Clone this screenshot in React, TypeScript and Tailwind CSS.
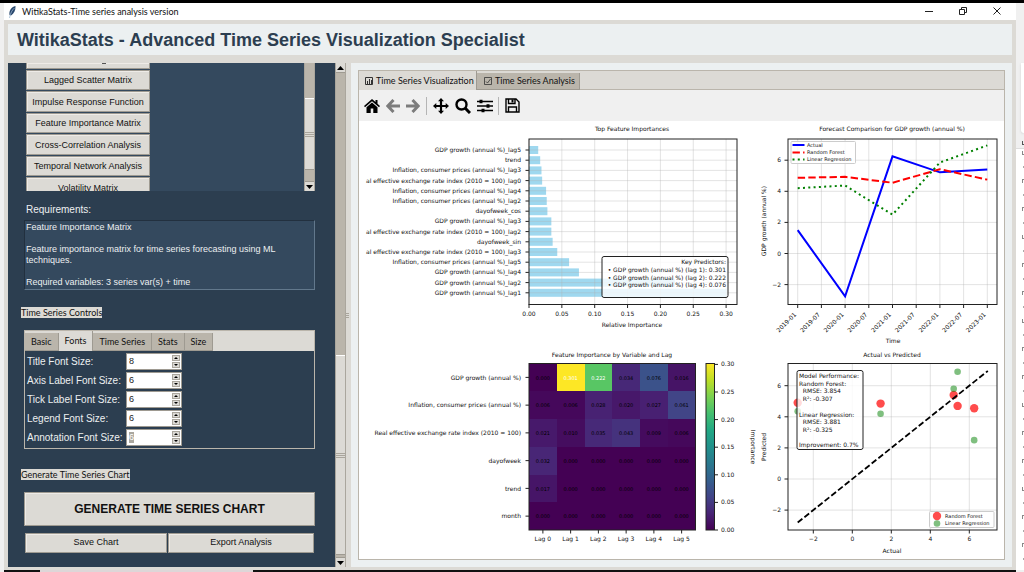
import type { ReactNode } from "react";

const ui = "font-['Liberation_Sans',Arial,sans-serif]";
const segoe = "font-['Lato','Open_Sans',sans-serif]";

const methods = [
  "Lagged Scatter Matrix",
  "Impulse Response Function",
  "Feature Importance Matrix",
  "Cross-Correlation Analysis",
  "Temporal Network Analysis",
  "Volatility Matrix",
];

const fontFields = [
  { id: "title", label: "Title Font Size:", value: "8" },
  { id: "axis", label: "Axis Label Font Size:", value: "6" },
  { id: "tick", label: "Tick Label Font Size:", value: "6" },
  { id: "legend", label: "Legend Font Size:", value: "6" },
  { id: "annotation", label: "Annotation Font Size:", value: "6" },
];

const importances = [
  { name: "GDP growth (annual %)_lag5", value: 0.014 },
  { name: "trend", value: 0.017 },
  { name: "Inflation, consumer prices (annual %)_lag3", value: 0.019 },
  { name: "al effective exchange rate index (2010 = 100)_lag0", value: 0.02 },
  { name: "Inflation, consumer prices (annual %)_lag4", value: 0.026 },
  { name: "Inflation, consumer prices (annual %)_lag2", value: 0.027 },
  { name: "dayofweek_cos", value: 0.028 },
  { name: "GDP growth (annual %)_lag3", value: 0.034 },
  { name: "al effective exchange rate index (2010 = 100)_lag2", value: 0.034 },
  { name: "dayofweek_sin", value: 0.036 },
  { name: "al effective exchange rate index (2010 = 100)_lag3", value: 0.043 },
  { name: "Inflation, consumer prices (annual %)_lag5", value: 0.061 },
  { name: "GDP growth (annual %)_lag4", value: 0.076 },
  { name: "GDP growth (annual %)_lag2", value: 0.222 },
  { name: "GDP growth (annual %)_lag1", value: 0.301 },
];

const heatRows = [
  { name: "GDP growth (annual %)", values: [0, 0.301, 0.222, 0.034, 0.076, 0.016] },
  { name: "Inflation, consumer prices (annual %)", values: [0.006, 0.006, 0.028, 0.02, 0.027, 0.061] },
  { name: "Real effective exchange rate index (2010 = 100)", values: [0.021, 0.01, 0.035, 0.043, 0.009, 0.006] },
  { name: "dayofweek", values: [0.032, 0, 0, 0, 0, 0] },
  { name: "trend", values: [0.017, 0, 0, 0, 0, 0] },
  { name: "month", values: [0, 0, 0, 0, 0, 0] },
];

const viridis = [
  [68, 1, 84], [72, 36, 117], [65, 68, 135], [53, 95, 141], [42, 120, 142], [33, 145, 140],
  [34, 168, 132], [68, 191, 112], [122, 209, 81], [189, 223, 38], [253, 231, 37],
];

function heatColor(v: number) {
  const t = Math.min(v / 0.301, 1) * 10;
  const i = Math.min(Math.floor(t), 9);
  const c = viridis[i].map((a, k) => Math.round(a + (viridis[i + 1][k] - a) * (t - i)));
  return `rgb(${c.join(",")})`;
}

function Arrow({ up = false }: { up?: boolean }) {
  return (
    <svg viewBox="0 0 7 4" className="h-1 w-[7px]" aria-hidden="true">
      <path d={up ? "M0 4 3.5 0 7 4Z" : "M0 0 3.5 4 7 0Z"} />
    </svg>
  );
}

function Grip({ className }: { className: string }) {
  return (
    <span className={`flex flex-col gap-px ${className}`}>
      <i className="h-px bg-[#a9a59c]" />
      <i className="h-px bg-[#a9a59c]" />
      <i className="h-px bg-[#a9a59c]" />
    </span>
  );
}

function Scrollbar({ before, thumb, up = true }: { before: string; thumb: string; up?: boolean }) {
  return (
    <div className="flex w-[11px] shrink-0 flex-col border-x border-[#aaa69d] bg-[#bab5ab]">
      {up && (
        <button aria-label="Scroll up" className="flex h-[10px] items-center justify-center border-b border-[#9e9a91] bg-[#dcdad5]">
          <Arrow up />
        </button>
      )}
      <div className={before} />
      <div className={`flex flex-col justify-center border-y border-t-white border-b-[#9e9a91] bg-[#dcdad5] ${thumb}`}>
        <Grip className="w-full" />
      </div>
      <div className="flex-1" />
      <button aria-label="Scroll down" className="flex h-[10px] items-center justify-center border-t border-[#9e9a91] bg-[#dcdad5]">
        <Arrow />
      </button>
    </div>
  );
}

const raised = "border border-[#9e9a91] bg-[#dcdad5] text-[#111] shadow-[inset_1px_1px_0_#eeebe7]";

function MethodPicker() {
  return (
    <div className="flex h-32 bg-[#34495e]">
      <div className="flex w-[124px] flex-col gap-px overflow-hidden">
        <button aria-label="Previous method" className={`flex h-[6px] shrink-0 items-start justify-center pl-8 ${raised} border-t-0`}>
          <span className="h-px w-1 bg-[#555]" />
        </button>
        {methods.map((m, i) => (
          <button key={m} className={`shrink-0 whitespace-nowrap text-[9px] leading-3 ${i % 2 ? "h-[21px]" : "h-5"} ${raised}`}>
            {m}
          </button>
        ))}
      </div>
      <div className="flex-1" />
      <Scrollbar up={false} before="h-[35px]" thumb="h-[72px]" />
    </div>
  );
}

function SizeField({ id, label, value }: { id: string; label: string; value: string }) {
  return (
    <div className="flex h-[19px] items-center">
      <label htmlFor={id} className="w-[99px] whitespace-nowrap text-[10px] leading-3 text-[#ecf0f1]">
        {label}
      </label>
      <div className="flex h-[17px] w-14 border border-[#9e9a91] bg-white p-px">
        <input
          id={id}
          defaultValue={value}
          className={`w-0 flex-1 pl-px text-[9px] outline-none ${
            id === "annotation" ? "text-white [background:linear-gradient(#aaa79f,#aaa79f)_no-repeat_1px_1px/5px_11px]" : "text-[#222]"
          }`}
        />
        <div className="flex w-2 flex-col gap-px">
          <button aria-label={`Increase ${label}`} className="flex flex-1 items-center justify-center border border-[#aaa69d] bg-[#dcdad5]">
            <svg viewBox="0 0 4 2" className="h-[2px] w-1"><path d="M0 2 2 0 4 2Z" /></svg>
          </button>
          <button aria-label={`Decrease ${label}`} className="flex flex-1 items-center justify-center border border-[#aaa69d] bg-[#dcdad5]">
            <svg viewBox="0 0 4 2" className="h-[2px] w-1"><path d="M0 0 2 2 4 0Z" /></svg>
          </button>
        </div>
      </div>
    </div>
  );
}

function Sidebar() {
  return (
    <aside className="flex w-[338px] shrink-0 bg-[#2c3e50]">
      <div className="flex flex-1 flex-col pr-5 pl-4">
        <div className="pl-[2px]">
          <MethodPicker />
        </div>
        <p className="mt-3 pl-[2px] text-[10px] leading-[14px] text-[#ecf0f1]">Requirements:</p>
        <div className="mt-[3px] h-[70px] border border-t-[#22303f] border-r-[#62788c] border-b-[#62788c] border-l-[#22303f] bg-[#34495e] pt-px pl-px text-[9px] leading-[11px] whitespace-pre-line text-[#ecf0f1]">
          {"Feature Importance Matrix\n\nFeature importance matrix for time series forecasting using ML\ntechniques.\n\nRequired variables: 3 series var(s) + time"}
        </div>
        <h2 className={`mt-[17px] -ml-[3px] self-start bg-[#dcdad5] text-[9px] leading-[11px] text-[#111] ${segoe}`}>
          Time Series Controls
        </h2>
        <div className="mt-3 border border-[#bab5ab]">
          <div role="tablist" className={`flex h-5 items-end bg-[#dcdad5] text-[9px] leading-3 text-[#111] ${segoe}`}>
            {["Basic", "Fonts", "Time Series", "Stats", "Size"].map((t) => (
              <button
                key={t}
                role="tab"
                aria-selected={t === "Fonts"}
                className={`border-r border-[#9e9a91] px-[6px] ${t === "Fonts" ? "h-5 bg-[#dcdad5]" : "h-[18px] border-b bg-[#bab5ab]"}`}
              >
                {t}
              </button>
            ))}
          </div>
          <div className="py-px pl-[2px]">
            {fontFields.map((f) => (
              <SizeField key={f.id} {...f} />
            ))}
          </div>
        </div>
        <h2 className={`mt-5 -ml-[3px] self-start bg-[#dcdad5] text-[9px] leading-[11px] text-[#111] ${segoe}`}>
          Generate Time Series Chart
        </h2>
        <button className={`mt-3 h-[34px] text-[12px] font-bold ${raised}`}>GENERATE TIME SERIES CHART</button>
        <div className="mt-[7px] flex gap-px px-px text-[9px]">
          <button className={`h-5 w-[142px] ${raised}`}>Save Chart</button>
          <button className={`h-5 flex-1 ${raised}`}>Export Analysis</button>
        </div>
      </div>
      <Scrollbar before="h-[282px]" thumb="h-[200px]" />
    </aside>
  );
}

function Toolbar() {
  const item = "flex size-[22px] items-center justify-center";
  const arrow = "flex h-[22px] w-5 items-center justify-center";
  return (
    <div className="flex h-[31px] items-center bg-[#f0f0f0] pl-[2px]">
      <button aria-label="Home" className={item}>
        <svg viewBox="0 0 16 14" className="h-[14px] w-4">
          <path d="M8 0 0 7 1 8.300 8 2.300 15 8.300 16 7 13.500 4.800V1H11.500V3ZM8 3.500 2.500 8.200V14H6.700V9.500H9.300V14H13.500V8.200Z" />
        </svg>
      </button>
      <button aria-label="Back" className={arrow}>
        <svg viewBox="0 0 14 14" className="size-[14px]" fill="none" stroke="#7c7c7c" strokeWidth="3">
          <path d="M7.500 1 1.800 7 7.500 13M2 7H14" />
        </svg>
      </button>
      <button aria-label="Forward" className={arrow}>
        <svg viewBox="0 0 14 14" className="size-[14px]" fill="none" stroke="#7c7c7c" strokeWidth="3">
          <path d="M6.500 1 12.200 7 6.500 13M12 7H0" />
        </svg>
      </button>
      <span className="mx-[3px] h-[18px] w-px bg-[#b5b5b5]" />
      <button aria-label="Pan" className={item}>
        <svg viewBox="0 0 16 16" className="size-4">
          <path d="M8 0 11 3.300H9.100V6.900H12.700V5L16 8 12.700 11V9.100H9.100V12.700H11L8 16 5 12.700H6.900V9.100H3.300V11L0 8 3.300 5V6.900H6.900V3.300H5Z" />
        </svg>
      </button>
      <button aria-label="Zoom" className={item}>
        <svg viewBox="0 0 16 16" className="size-4" fill="none" stroke="#000">
          <circle cx="6.500" cy="6.500" r="5" strokeWidth="2.400" />
          <path d="M10 10 15 15" strokeWidth="3" />
        </svg>
      </button>
      <button aria-label="Configure subplots" className={item}>
        <svg viewBox="0 0 16 14" className="h-[14px] w-4" stroke="#000">
          <path d="M0 2.500H16M0 7H16M0 11.500H16" strokeWidth="1.300" />
          <path d="M4 .7V4.300M11 5.200V8.800M6 9.700V13.300" strokeWidth="3" />
        </svg>
      </button>
      <span className="mx-[2px] h-[18px] w-px bg-[#b5b5b5]" />
      <button aria-label="Save figure" className={item}>
        <svg viewBox="0 0 15 15" className="size-[15px]" fill="none" stroke="#000" strokeWidth="1.400">
          <path d="M1 1H11L14 4V14H1ZM3.500 1V5.500H10V1M3.500 14V9H11.500V14" />
          <path d="M7.500 1.500V4.500" strokeWidth="2" />
        </svg>
      </button>
    </div>
  );
}

type TProps = { x: number; y: number; children: ReactNode; anchor?: "start" | "middle" | "end"; size?: number; rotate?: number; fill?: string };

function T({ x, y, children, anchor = "middle", size = 6, rotate, fill = "#111" }: TProps) {
  return (
    <text
      x={x}
      y={y}
      textAnchor={anchor}
      fontSize={size}
      fill={fill}
      transform={rotate ? `rotate(${rotate} ${x} ${y})` : undefined}
      className="whitespace-pre"
    >
      {children}
    </text>
  );
}

function Frame({ x, y, w, h }: { x: number; y: number; w: number; h: number }) {
  return <rect x={x} y={y} width={w} height={h} fill="none" stroke="#222" strokeWidth="1" />;
}

const grid = { stroke: "#b0b0b0", strokeOpacity: 0.35, strokeWidth: 1 };

function ImportanceChart() {
  const px = (v: number) => 169 + v * 657;
  const py = (i: number) => 29 + i * 10.2;
  return (
    <g>
      <T x={272} y={10}>Top Feature Importances</T>
      {importances.map((d, i) => (
        <g key={d.name}>
          <rect x={169} y={py(i) - 4} width={px(d.value) - 169} height={8} fill="#87ceeb" fillOpacity={0.8} />
          <path d={`M169 ${py(i)}H377`} {...grid} />
          <path d={`M165.500 ${py(i)}H169`} stroke="#222" />
          <T x={161} y={py(i) + 2} anchor="end">{d.name}</T>
        </g>
      ))}
      {[0, 0.05, 0.1, 0.15, 0.2, 0.25, 0.3].map((v) => (
        <g key={v}>
          <path d={`M${px(v)} 18V183`} {...grid} />
          <path d={`M${px(v)} 183V187`} stroke="#222" />
          <T x={px(v)} y={195}>{v.toFixed(2)}</T>
        </g>
      ))}
      <Frame x={169} y={18} w={208} h={165.5} />
      <T x={272} y={206}>Relative Importance</T>
      <rect x={242} y={135.5} width={126} height={41} rx={2} fill="#fff" fillOpacity={0.8} stroke="#222" />
      <T x={366} y={143} anchor="end">Key Predictors:</T>
      <T x={366} y={151} anchor="end">• GDP growth (annual %) (lag 1): 0.301</T>
      <T x={366} y={159} anchor="end">• GDP growth (annual %) (lag 2): 0.222</T>
      <T x={366} y={166} anchor="end">• GDP growth (annual %) (lag 4): 0.076</T>
    </g>
  );
}

function ForecastChart() {
  const px = (t: number) => 437.7 + t * 23.7;
  const py = (v: number) => 132.5 - v * 15.55;
  const line = (vs: number[]) => vs.map((v, i) => `${px(i * 2)},${py(v)}`).join(" ");
  const dates = ["2019-01", "2019-07", "2020-01", "2020-07", "2021-01", "2021-07", "2022-01", "2022-07", "2023-01"];
  return (
    <g>
      <T x={532} y={10}>Forecast Comparison for GDP growth (annual %)</T>
      {dates.map((d, i) => (
        <g key={d}>
          <path d={`M${px(i)} 18V183`} {...grid} />
          <path d={`M${px(i)} 183V187`} stroke="#222" />
          <T x={px(i) - 1} y={194} anchor="end" rotate={-45}>{d}</T>
        </g>
      ))}
      {[6, 4, 2, 0, -2].map((v) => (
        <g key={v}>
          <path d={`M428 ${py(v)}H637`} {...grid} />
          <path d={`M424.500 ${py(v)}H428`} stroke="#222" />
          <T x={421} y={py(v) + 2} anchor="end">{String(v).replace("-", "−")}</T>
        </g>
      ))}
      <polyline points={line([1.5, -2.75, 6.25, 5.22, 5.4])} fill="none" stroke="#00f" strokeWidth="2" />
      <polyline points={line([4.87, 4.93, 4.55, 5.42, 4.75])} fill="none" stroke="#f00" strokeWidth="2" strokeDasharray="7.400 3.200" />
      <polyline points={line([4.2, 4.37, 2.5, 5.85, 6.95])} fill="none" stroke="#008000" strokeWidth="2" strokeDasharray="2 3.300" />
      <Frame x={428} y={18} w={209} h={165.5} />
      <rect x={431} y={20.5} width={64.5} height={22} rx={1} fill="#fff" fillOpacity={0.8} stroke="#ccc" />
      <path d="M432.500 24H444.500" stroke="#00f" strokeWidth="2" />
      <path d="M432.500 31.500H444.500" stroke="#f00" strokeWidth="2" strokeDasharray="7.400 3.200" />
      <path d="M432.500 38.500H444.500" stroke="#008000" strokeWidth="2" strokeDasharray="2 3.300" />
      <T x={447} y={26} anchor="start" size={5}>Actual</T>
      <T x={447} y={33} anchor="start" size={5}>Random Forest</T>
      <T x={447} y={40} anchor="start" size={5}>Linear Regression</T>
      <T x={406} y={100} rotate={-90}>GDP growth (annual %)</T>
      <T x={533} y={222}>Time</T>
    </g>
  );
}

function LagHeatmap() {
  const cell = 27.75;
  return (
    <g>
      <T x={252} y={236}>Feature Importance by Variable and Lag</T>
      {heatRows.map((r, i) => {
        const y = 242.5 + i * cell;
        return (
          <g key={r.name}>
            {r.values.map((v, k) => (
              <g key={k}>
                <rect x={169 + k * cell} y={y} width={cell} height={cell} fill={heatColor(v)} shapeRendering="crispEdges" />
                <T x={169 + (k + 0.5) * cell} y={y + 16} size={5} fill={v > 0.15 ? "#fff" : "#000"}>{v.toFixed(3)}</T>
              </g>
            ))}
            <path d={`M165.500 ${y + cell / 2}H169`} stroke="#222" />
            <T x={161} y={y + 16} anchor="end">{r.name}</T>
          </g>
        );
      })}
      {[0, 1, 2, 3, 4, 5].map((k) => (
        <g key={k}>
          <path d={`M${169 + (k + 0.5) * cell} 409V412.500`} stroke="#222" />
          <T x={169 + (k + 0.5) * cell} y={420}>Lag {k}</T>
        </g>
      ))}
      <Frame x={169} y={242.5} w={166.5} h={166.5} />
      <defs>
        <linearGradient id="viridis" x1="0" x2="0" y1="1" y2="0">
          {viridis.map((c, i) => (
            <stop key={i} offset={i / 10} stopColor={`rgb(${c.join(",")})`} />
          ))}
        </linearGradient>
      </defs>
      <rect x={346} y={242.5} width={8.5} height={166.5} fill="url(#viridis)" stroke="#222" />
      {[0, 0.05, 0.1, 0.15, 0.2, 0.25, 0.3].map((v) => (
        <g key={v}>
          <path d={`M355 ${409 - v * 552}H358`} stroke="#222" />
          <T x={361} y={411 - v * 552} anchor="start">{v.toFixed(2)}</T>
        </g>
      ))}
      <T x={391} y={326} rotate={90}>Importance</T>
    </g>
  );
}

function ScatterChart() {
  const px = (v: number) => 492.3 + v * 19.5;
  const py = (v: number) => 358 - v * 15.55;
  const rf = [[-2.8, 4.9], [1.45, 4.85], [5.2, 5.4], [5.4, 4.7], [6.25, 4.55]];
  const lr = [[-2.8, 4.35], [1.45, 4.2], [5.2, 5.8], [5.4, 6.9], [6.25, 2.5]];
  const notes = ["Model Performance:", "Random Forest:", "  RMSE: 3.854", "  R²: -0.307", "", "Linear Regression:", "  RMSE: 3.881", "  R²: -0.325", "", "Improvement: 0.7%"];
  return (
    <g>
      <T x={532} y={236}>Actual vs Predicted</T>
      {[-2, 0, 2, 4, 6].map((v) => (
        <g key={v}>
          <path d={`M${px(v)} 242.500V409M428 ${py(v)}H637`} {...grid} />
          <path d={`M${px(v)} 409V412.500M424.500 ${py(v)}H428`} stroke="#222" />
          <T x={px(v)} y={420}>{String(v).replace("-", "−")}</T>
          <T x={421} y={py(v) + 2} anchor="end">{String(v).replace("-", "−")}</T>
        </g>
      ))}
      {rf.map(([a, b]) => <circle key={a} cx={px(a)} cy={py(b)} r={4.2} fill="#f00" fillOpacity={0.7} />)}
      {lr.map(([a, b]) => <circle key={a} cx={px(a)} cy={py(b)} r={3.3} fill="#008000" fillOpacity={0.5} />)}
      <path d={`M${px(-2.8)} ${py(-2.8)}L${px(6.95)} ${py(6.95)}`} stroke="#000" strokeWidth="1.800" strokeDasharray="6 2.600" />
      <Frame x={428} y={242.5} w={209} h={166.5} />
      <rect x={437} y={249.5} width={66} height={79} rx={2} fill="#fff" fillOpacity={0.8} stroke="#222" />
      {notes.map((n, i) => (
        <T key={i} x={439} y={257 + i * 7.7} anchor="start">{n}</T>
      ))}
      <rect x={569.5} y={390.5} width={64.5} height={16} rx={1} fill="#fff" fillOpacity={0.8} stroke="#ccc" />
      <circle cx={577} cy={395} r={4.2} fill="#f00" fillOpacity={0.7} />
      <circle cx={577} cy={402.5} r={3.3} fill="#008000" fillOpacity={0.5} />
      <T x={585} y={397} anchor="start" size={5}>Random Forest</T>
      <T x={585} y={404} anchor="start" size={5}>Linear Regression</T>
      <T x={406} y={326} rotate={-90}>Predicted</T>
      <T x={532} y={432}>Actual</T>
    </g>
  );
}

function Workspace() {
  return (
    <main className="flex min-w-0 flex-1 flex-col bg-[#ecf0f1] px-[7px] pt-[7px] pb-[7px]">
      <div className="flex flex-1 flex-col border border-[#bab5ab] bg-[#dcdad5]">
        <div role="tablist" className={`flex h-[19px] items-end text-[9px] text-[#111] ${segoe}`}>
          <button role="tab" aria-selected="true" className="flex h-[19px] w-[118px] items-center gap-[3px] border-r border-[#9e9a91] pt-px pl-[6px] whitespace-nowrap">
            <svg viewBox="0 0 8 8" className="size-2 shrink-0" fill="none" stroke="#333">
              <path d="M.5 .5H7.500V7.500H.5ZM2.500 7V4M4.500 7V2M6.500 7V3" />
            </svg>
            Time Series Visualization
          </button>
          <button role="tab" aria-selected="false" className="flex h-[17px] w-[103px] items-center gap-[3px] border-r border-b border-[#9e9a91] bg-[#bab5ab] pl-[7px] whitespace-nowrap">
            <svg viewBox="0 0 8 8" className="size-2 shrink-0" fill="none" stroke="#333" strokeWidth=".8">
              <path d="M.5 .5H7.500V7.500H.5ZM2 4.500 3.500 6 6.500 2" />
            </svg>
            Time Series Analysis
          </button>
          <div className="h-px flex-1 bg-[#bab5ab]" />
        </div>
        <Toolbar />
        <div className="flex-1 bg-white">
          <svg viewBox="-1 0 645 437" className="w-full font-['DejaVu_Sans',Verdana,sans-serif]" role="img" aria-label="Forecast figure">
            <ImportanceChart />
            <ForecastChart />
            <LagHeatmap />
            <ScatterChart />
          </svg>
        </div>
      </div>
    </main>
  );
}

function WindowBehind() {
  return (
    <div className="flex w-2 shrink-0 flex-col bg-[#f0f0f0]" aria-hidden="true">
      <div className="mt-[60px] ml-[5px] h-[70px] rounded-bl bg-white shadow-sm" />
      <div className="mt-2 mb-[3px] ml-[6px] h-1 border-b border-l border-[#555]" />
      <div className="flex flex-1 flex-col gap-[11px] border-t border-[#ddd] bg-white pt-[2px] pl-[6px]">
        {Array.from({ length: 15 }, (_, i) => (
          <div key={i} className="flex flex-col items-end gap-[11px]">
            <i className={`h-1 w-[2px] border-[#888] ${i % 3 ? "border-t border-l" : "border-b border-l"}`} />
            <i className="h-[2px] w-px bg-[#aaa]" />
          </div>
        ))}
      </div>
    </div>
  );
}

export default function App() {
  return (
    <div className={`flex min-h-screen flex-col border-t-[3px] border-black bg-[#f0f0f0] ${ui}`}>
      <div className="flex flex-1 pl-1">
        <div className="flex min-w-0 flex-1 flex-col bg-[#dcdad5]">
          <div className={`flex h-[17px] items-center bg-white pl-1 text-[9px] text-[#111] ${segoe}`}>
            <svg viewBox="0 0 8 12" className="mr-[6px] h-3 w-2" aria-hidden="true">
              <path d="M7.500 0C3 1 .8 5 1.500 9L3 9.500C6 7.500 7.800 4 7.500 0Z" fill="#27466b" />
              <path d="M6.500 2C4 4 2.500 7 1.500 12" fill="none" stroke="#9db8d2" strokeWidth=".8" />
            </svg>
            <h1>WitikaStats-Time series analysis version</h1>
            <div className="ml-auto flex h-full pr-[2px] pb-[2px]">
              <button aria-label="Minimize" className="flex w-[34px] items-center justify-center">
                <svg viewBox="0 0 8 8" className="size-2" stroke="#222"><path d="M0 4.500H8" /></svg>
              </button>
              <button aria-label="Restore" className="flex w-[34px] items-center justify-center">
                <svg viewBox="0 0 8 8" className="size-2" fill="none" stroke="#222"><path d="M.5 2.500H5.500V7.500H.5ZM2.500 2V.5H7.500V5.500H6" /></svg>
              </button>
              <button aria-label="Close" className="flex w-[34px] items-center justify-center">
                <svg viewBox="0 0 8 8" className="size-2" fill="none" stroke="#222"><path d="M.5 .5 7.500 7.500M7.500 .5 .5 7.500" /></svg>
              </button>
            </div>
          </div>
          <header className="mx-1 mt-1 flex h-[31px] items-center bg-[#ecf0f1] pl-[9px]">
            <p className="text-[18px] leading-none font-bold text-[#2c3e50]">
              WitikaStats - Advanced Time Series Visualization Specialist
            </p>
          </header>
          <div className="mx-1 mt-2 mb-[3px] flex flex-1">
            <Sidebar />
            <div className="flex w-[5px] items-center">
              <Grip className="w-[3px]" />
            </div>
            <Workspace />
          </div>
        </div>
        <WindowBehind />
      </div>
      <div className="flex h-[2px] pr-2 pl-1">
        <div className="w-9 bg-[#111]" />
        <div className="w-[213px] bg-[#ddd6d8]" />
        <div className="flex-1 bg-[#111]" />
      </div>
    </div>
  );
}
